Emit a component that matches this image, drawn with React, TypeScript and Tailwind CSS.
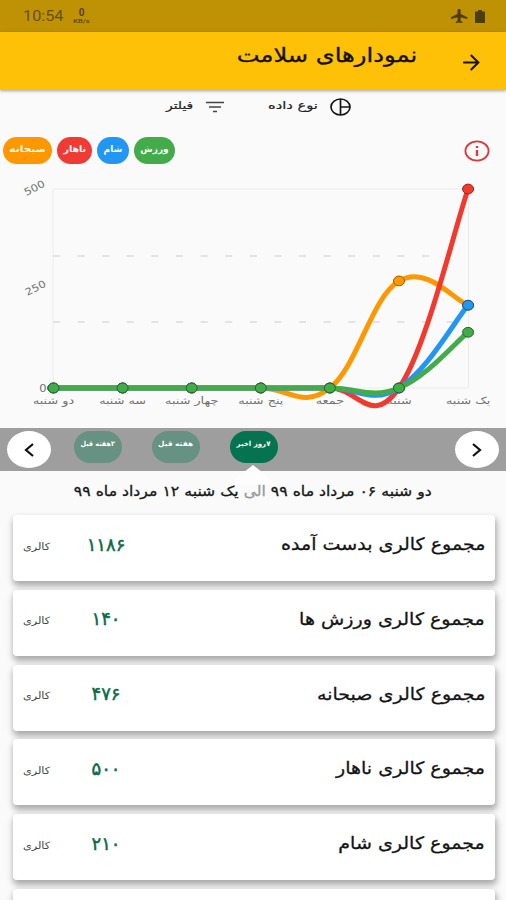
import { MdArrowForward } from 'react-icons/md';

const days = ['دو شنبه', 'سه شنبه', 'چهار شنبه', 'پنج شنبه', 'جمعه', 'شنبه', 'یک شنبه'];

const series = [
  { name: 'صبحانه', color: '#ff9800', stroke: '#9a5f08', values: [0, 0, 0, 0, 0, 269, 208] },
  { name: 'ناهار', color: '#f13a2d', stroke: '#a3231c', values: [0, 0, 0, 0, 0, 0, 500] },
  { name: 'شام', color: '#2196f3', stroke: '#1b5583', values: [0, 0, 0, 0, 0, 0, 208] },
  { name: 'ورزش', color: '#43ab49', stroke: '#24692a', values: [0, 0, 0, 0, 0, 0, 140] },
];

const legend = [
  { name: 'صبحانه', box: 'w-[49px] bg-[#ff9800]', text: 'scale-x-[1.17]' },
  { name: 'ناهار', box: 'w-[35px] bg-[#f13a33]', text: 'scale-x-[1.05]' },
  { name: 'شام', box: 'w-8 bg-[#2196f3]', text: 'scale-x-100' },
  { name: 'ورزش', box: 'w-[41px] bg-[#43ab49]', text: 'scale-x-100' },
];

const totals = [
  { label: 'مجموع کالری بدست آمده', value: '۱۱۸۶' },
  { label: 'مجموع کالری ورزش ها', value: '۱۴۰' },
  { label: 'مجموع کالری صبحانه', value: '۴۷۶' },
  { label: 'مجموع کالری ناهار', value: '۵۰۰' },
  { label: 'مجموع کالری شام', value: '۲۱۰' },
];

// Chart geometry
const LEFT = 53.5;
const STEP = 69.1;
const TOP = 19;
const BASE = 218;

const px = (i: number) => LEFT + i * STEP;
const py = (v: number) => BASE - (v / 500) * (BASE - TOP);

// Cubic line with 0.2 intensity
function buildPath(values: number[]) {
  const p = values.map((v, i) => [px(i), py(v)]);
  let d = `M${p[0][0]} ${p[0][1]}`;
  for (let i = 1; i < p.length; i++) {
    const before = p[Math.max(i - 2, 0)];
    const prev = p[i - 1];
    const cur = p[i];
    const next = p[Math.min(i + 1, p.length - 1)];
    d += ` C${prev[0] + (cur[0] - before[0]) * 0.2} ${prev[1] + (cur[1] - before[1]) * 0.2}`;
    d += ` ${cur[0] - (next[0] - prev[0]) * 0.2} ${cur[1] - (next[1] - prev[1]) * 0.2}`;
    d += ` ${cur[0]} ${cur[1]}`;
  }
  return d;
}

function StatusBar() {
  return (
    <div className="h-8 bg-[#bf9105] flex items-center justify-between pl-[23px] pr-[21px] text-[#65500c]">
      <div className="flex items-center gap-[11px] font-[Roboto]">
        <span className="text-[14px] leading-none w-[41px] whitespace-nowrap origin-left scale-x-[1.16]">10:54</span>
        <div className="flex flex-col items-center text-[#55430c]">
          <span className="text-[10px] leading-[9px] font-bold">0</span>
          <span className="text-[6px] leading-[7px] font-medium scale-x-125">KB/s</span>
        </div>
      </div>
      <div className="flex items-center gap-[7px]">
        <svg width="17" height="14" viewBox="2 2 20 20" preserveAspectRatio="none" fill="#4e3d0c" stroke="#4e3d0c" strokeWidth="0.6">
          <path transform="rotate(0 12 12)" d="M21 16v-2l-8-5V3.500c0-.83-.67-1.500-1.500-1.500S10 2.670 10 3.500V9l-8 5v2l8-2.500V19l-2 1.500V22l3.500-1 3.500 1v-1.500L13 19v-5.500l8 2.500z" />
        </svg>
        <svg width="10" height="13" viewBox="0 0 10 13" fill="#4e3d0c">
          <path d="M3 0H7V1.500H10V13H0V1.500H3Z" />
        </svg>
      </div>
    </div>
  );
}

function Header() {
  return (
    <header className="h-[58px] bg-[#ffc107] flex items-center justify-end pr-[22px] shadow-[0_1px_3px_rgba(0,0,0,0.35)] relative">
      <h1 className="text-[20px] leading-none text-[#141005] whitespace-nowrap mr-[42px] pb-3 origin-right scale-x-[1.21] [-webkit-text-stroke:0.3px]">نمودارهای سلامت</h1>
      <MdArrowForward size={25} className="text-[#1a1503] mt-0.5" />
    </header>
  );
}

function Chart() {
  return (
    <svg width="506" height="258" viewBox="0 0 506 258" className="block">
      <path d={`M${LEFT - 0.5} ${TOP}H468.500V${BASE}H${LEFT - 0.5}Z`} fill="none" stroke="#ececec" />
      <path d="M53 86H450M53 152H468" stroke="#dcdcdc" strokeWidth="1.3" strokeDasharray="7 17.6" />
      <g fill="#707070" fontFamily="DejaVu Sans" fontSize="10" textAnchor="middle">
        <text transform="translate(36 21) rotate(-27) scale(1.15 1)">500</text>
        <text transform="translate(37 121) rotate(-27) scale(1.15 1)">250</text>
        <text transform="translate(43 222) scale(1.15 1)">0</text>
        {days.map((day, i) => (
          <text key={day} transform={`translate(${px(i)} 234) scale(1.28 1)`} direction="rtl">{day}</text>
        ))}
      </g>
      {series.map((s) => (
        <g key={s.name}>
          <path d={buildPath(s.values)} fill="none" stroke={s.color} strokeWidth="5" />
          {s.values.map((v, i) => (
            <ellipse key={i} cx={px(i)} cy={py(v)} rx="5.5" ry="4.9" fill={s.color} stroke={s.stroke} />
          ))}
        </g>
      ))}
    </svg>
  );
}

function Chevron({ d }: { d: string }) {
  return (
    <div className="w-[44px] h-[37px] rounded-[50%] bg-white flex items-center justify-center">
      <svg width="12" height="16" viewBox="0 0 12 16" fill="none" stroke="#111" strokeWidth="2.2">
        <path d={d} />
      </svg>
    </div>
  );
}

export default function App() {
  return (
    <div className="w-[506px] h-[900px] overflow-hidden bg-[#fafafa] font-['DejaVu_Sans','Noto_Sans',sans-serif]">
      <StatusBar />
      <Header />

      <div className="h-[38px] flex pl-[166px] pt-[7px]">
        <div className="flex items-center h-5 w-[58px] justify-between text-[#222]">
          <span className="text-[11px] leading-none whitespace-nowrap pb-1 origin-left scale-x-[1.26] [-webkit-text-stroke:0.2px]">فیلتر</span>
          <svg width="18" height="12" viewBox="0 0 18 12" stroke="#444" strokeWidth="1.6">
            <path d="M0 1.500H18M3 6H15M7 10.500H11" />
          </svg>
        </div>
        <div className="flex items-center h-5 w-[83px] justify-between ml-[44px] text-[#222]">
          <span className="text-[11px] leading-none whitespace-nowrap pb-1 origin-left scale-x-[1.33] [-webkit-text-stroke:0.2px]">نوع داده</span>
          <svg width="21" height="18" viewBox="0 0 21 18" fill="none" stroke="#151515" strokeWidth="1.7">
            <ellipse cx="10.5" cy="9" rx="9.5" ry="8" />
            <path d="M10.500 1V17M10.500 9H20" />
          </svg>
        </div>
      </div>

      <div className="h-[42px] flex items-start justify-between pl-[3px] pr-[16px] pt-[9px]">
        <div className="flex gap-[5px]">
          {legend.map((item) => (
            <div key={item.name} className={`h-[27px] rounded-[14px] flex items-center justify-center text-white font-bold text-[9px] leading-none whitespace-nowrap pb-[3px] ${item.box}`}>
              <span className={item.text}>{item.name}</span>
            </div>
          ))}
        </div>
        <svg width="26" height="22" viewBox="0 0 26 22" fill="none" stroke="#d83b3b" className="mt-[3px]">
          <ellipse cx="13" cy="11" rx="11.6" ry="9.6" strokeWidth="1.8" />
          <path d="M13 10V16M13 6V8" strokeWidth="2.4" />
        </svg>
      </div>

      <Chart />

      <div className="h-[43px] bg-[#9e9e9e] flex items-center justify-between px-[7px] relative">
        <Chevron d="M10 2L3 8L10 14" />
        <div className="flex gap-[30px] -mt-1.5 mr-[155px] text-white font-bold text-[7px] leading-none whitespace-nowrap">
          <div dir="rtl" className="w-12 h-8 rounded-[16px] bg-[#679183] flex items-center justify-center pb-1">
            <span className="scale-x-[0.92]">۲هفته قبل</span>
          </div>
          <div dir="rtl" className="w-12 h-8 rounded-[16px] bg-[#679183] flex items-center justify-center pb-1">
            <span className="scale-x-[1.06]">هفته قبل</span>
          </div>
          <div dir="rtl" className="w-12 h-8 rounded-[16px] bg-[#067350] flex items-center justify-center pb-1">
            <span>۷روز اخیر</span>
          </div>
        </div>
        <Chevron d="M2 2L9 8L2 14" />
        <svg width="50" height="20" viewBox="0 0 50 20" className="absolute left-[228px] top-[37px]">
          <path d="M25 0L50 20H0Z" fill="#fdfdfd" />
        </svg>
      </div>

      <div className="h-[44px] pt-[13px] flex justify-center text-[14px] leading-[14px] text-[#161616] whitespace-nowrap relative">
        <p dir="rtl" className="scale-x-[1.12] [-webkit-text-stroke:0.3px]">
          دو شنبه ۰۶ مرداد ماه ۹۹ <span className="text-[#999]">الی</span> یک شنبه ۱۲ مرداد ماه ۹۹
        </p>
      </div>

      <div className="flex flex-col gap-[8.8px] pl-[13px] pr-[11px]">
        {totals.map((item) => (
          <div key={item.label} dir="rtl" className="h-[66px] shrink-0 bg-white rounded-[4px] shadow-[1px_4px_6px_1px_rgba(0,0,0,0.32)] flex items-center pr-[10px] pl-[10px] pb-[7px] whitespace-nowrap leading-none">
            <span className="text-[17px] text-[#141414] origin-right scale-x-[1.12] [-webkit-text-stroke:0.3px]">{item.label}</span>
            <span className="mr-auto w-[60px] text-center text-[18px] text-[#0b6b47] [-webkit-text-stroke:0.5px]">{item.value}</span>
            <span className="w-[53px] text-left text-[10px] text-[#444] pt-1 origin-left scale-x-[1.12]">کالری</span>
          </div>
        ))}
        <div className="h-[66px] shrink-0 bg-white rounded-[4px] shadow-[1px_4px_6px_1px_rgba(0,0,0,0.32)]" />
      </div>
    </div>
  );
}
